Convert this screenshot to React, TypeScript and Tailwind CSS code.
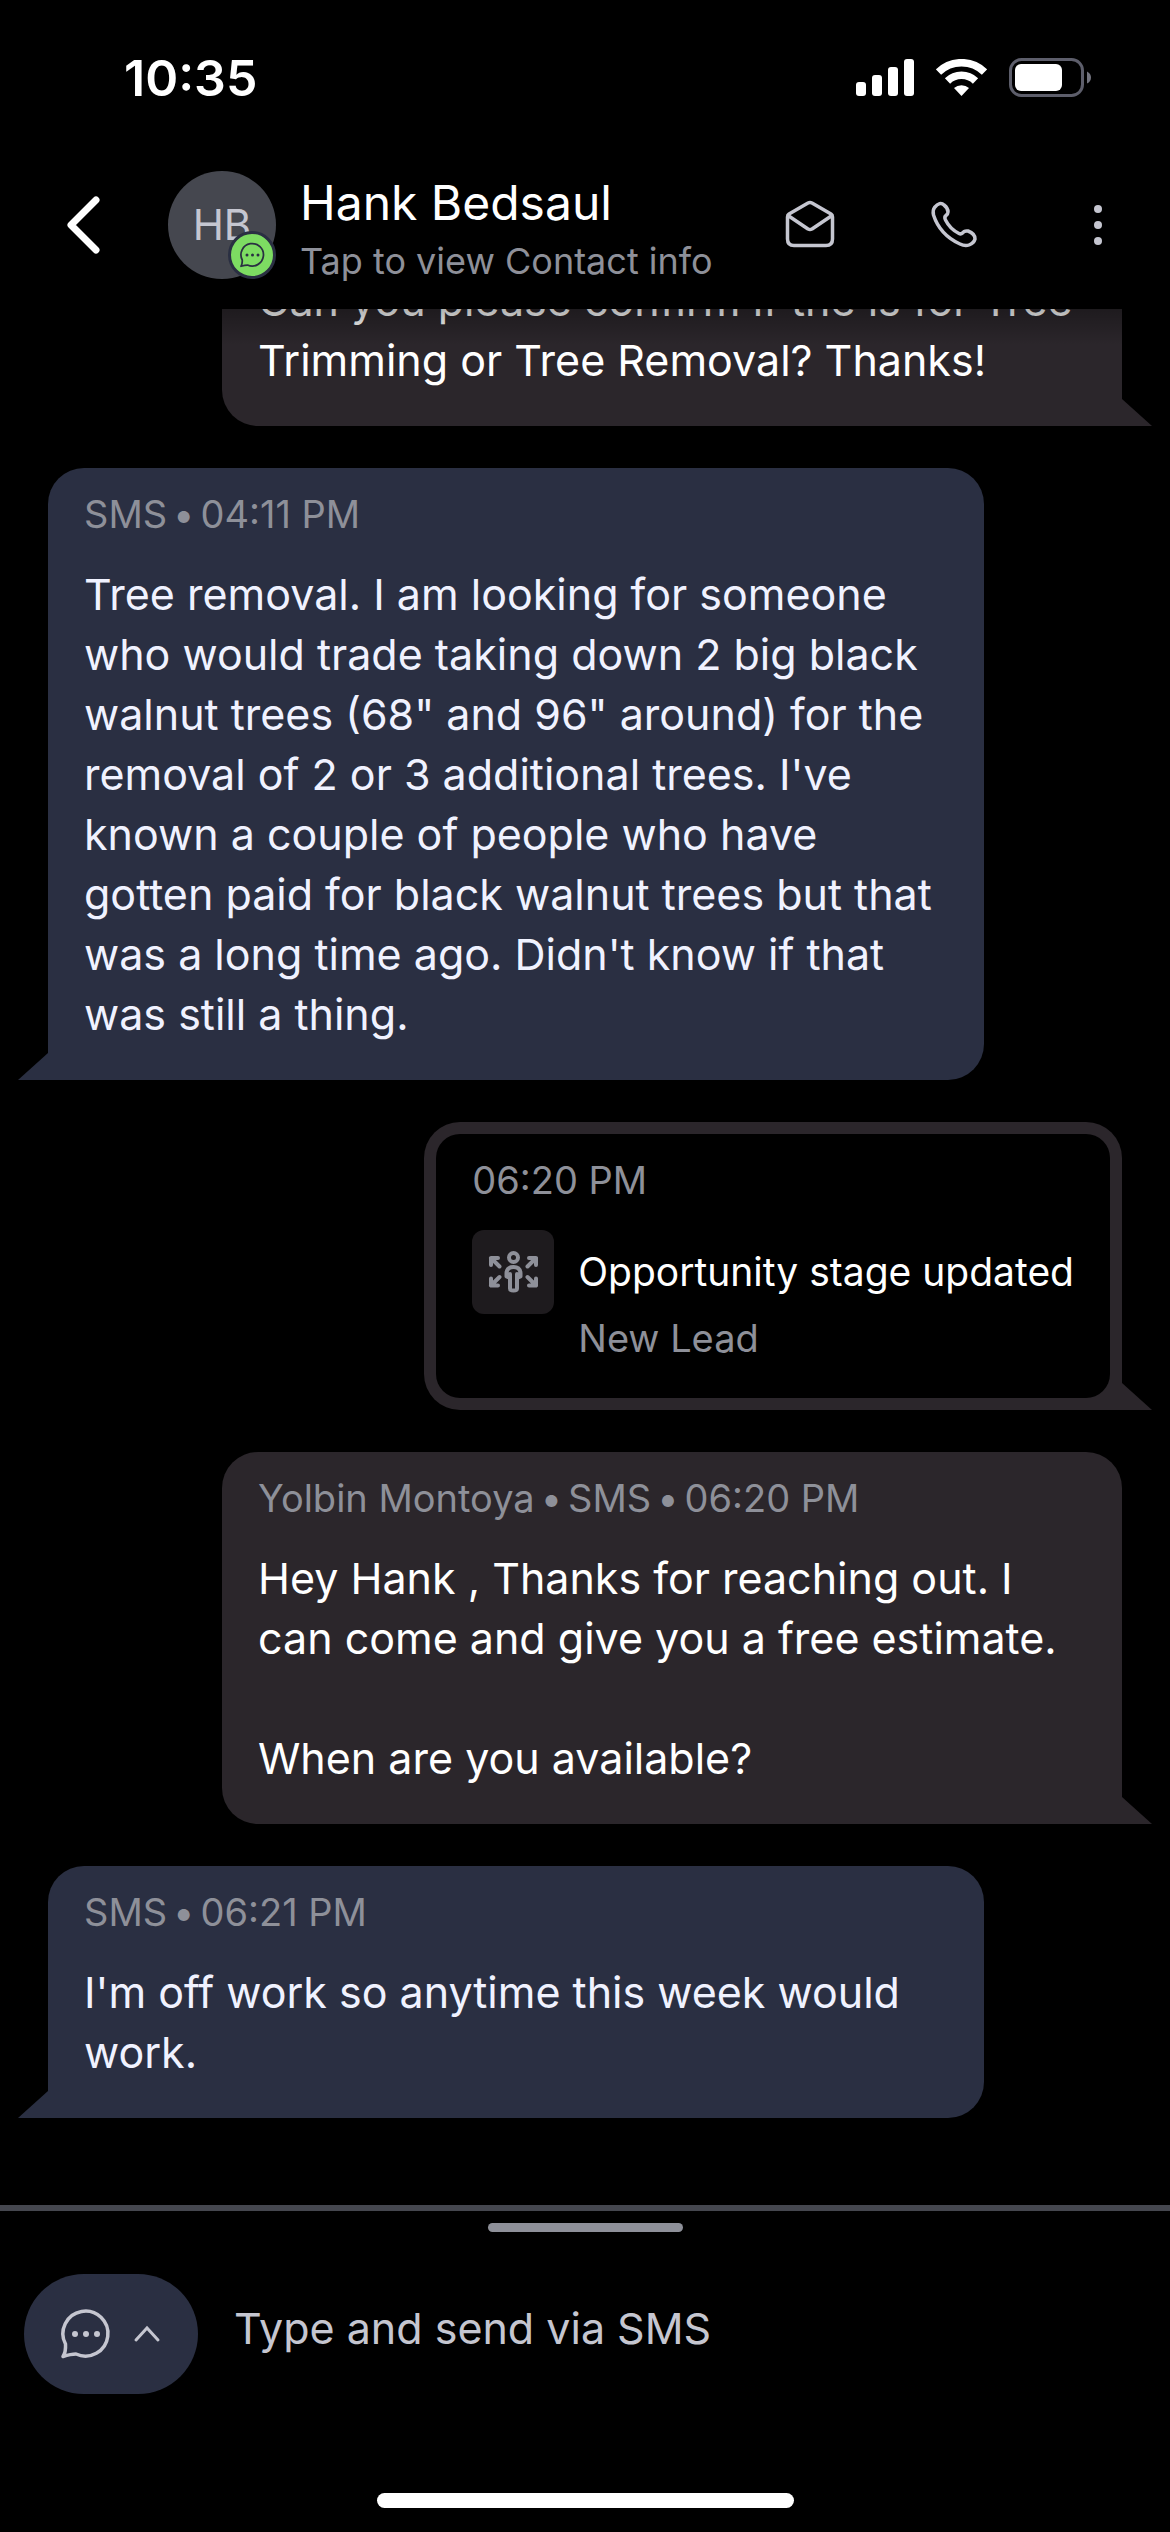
import { Fragment, useState, type ReactNode } from "react";

type BubbleProps = {
  side: "in" | "out";
  meta?: string[];
  children: ReactNode;
};

const SmsIcon = ({ className }: { className?: string }) => (
  <svg viewBox="0 0 56 56" fill="none" className={className} aria-hidden="true">
    <path
      d="M6 50.500 Q9 46 8.500 38 A22.500 22.500 0 1 1 19 48 Q14 48 6 50.500 Z"
      stroke="currentColor"
      strokeWidth="3.500"
      strokeLinejoin="round"
    />
    <circle cx="18" cy="28" r="3" fill="currentColor" />
    <circle cx="29" cy="28" r="3" fill="currentColor" />
    <circle cx="40" cy="28" r="3" fill="currentColor" />
  </svg>
);

const Meta = ({ parts }: { parts: string[] }) => (
  <p className="mb-7 flex gap-1.5 text-[38px] leading-[44px] text-[#8e9099]">
    {parts.map((part, i) => (
      <Fragment key={part}>
        {i > 0 && <span>•</span>}
        <span>{part}</span>
      </Fragment>
    ))}
  </p>
);

const Tail = ({ side }: { side: "in" | "out" }) =>
  side === "in" ? (
    <span className="absolute bottom-0 -left-[30px] h-[27px] w-[30px] bg-[#2a2f42] [clip-path:polygon(100%_0,100%_100%,0_100%)]" />
  ) : (
    <span className="absolute bottom-0 -right-[30px] h-[27px] w-[30px] bg-[#2b262b] [clip-path:polygon(0_0,100%_100%,0_100%)]" />
  );

const Bubble = ({ side, meta, children }: BubbleProps) => (
  <article
    className={
      side === "in"
        ? "relative mr-auto w-full max-w-[936px] shrink-0 rounded-[36px] rounded-bl-none bg-[#2a2f42] px-9 pt-6 pb-9 text-[#f0f2ff]"
        : "relative ml-auto w-full max-w-[900px] shrink-0 rounded-[36px] rounded-br-none bg-[#2b262b] px-9 pt-6 pb-9 text-white"
    }
  >
    {meta && <Meta parts={meta} />}
    <p className="text-[43px] leading-[60px] whitespace-pre-line">{children}</p>
    <Tail side={side} />
  </article>
);

const StatusBar = () => (
  <div className="flex h-[155px] shrink-0 items-center justify-between pr-[79px] pl-[124px] text-white">
    <span className="text-[50px] leading-[60px] font-semibold">10:35</span>
    <div className="flex items-center gap-[22px]">
      <svg viewBox="0 0 58 37" className="h-[37px] w-[58px]" fill="currentColor">
        <rect x="0" y="23" width="10" height="14" rx="3" />
        <rect x="16" y="16" width="10" height="21" rx="3" />
        <rect x="32" y="8" width="10" height="29" rx="3" />
        <rect x="48" y="0" width="10" height="37" rx="3" />
      </svg>
      <svg viewBox="0 0 51 37" className="h-[37px] w-[51px]" fill="none">
        <path d="M2.500 13 A33 33 0 0 1 48.500 13" stroke="currentColor" strokeWidth="7.500" />
        <path d="M11.500 22 A20 20 0 0 1 39.500 22" stroke="currentColor" strokeWidth="7.500" />
        <path d="M18 29 A12 12 0 0 1 33 29 L25.500 37 Z" fill="currentColor" />
      </svg>
      <svg viewBox="0 0 82 39" className="h-[39px] w-[82px]" fill="none">
        <rect x="1.500" y="1.500" width="72" height="36" rx="11" stroke="#5d5e6b" strokeWidth="3" />
        <rect x="6" y="6" width="47" height="27" rx="6" fill="currentColor" />
        <path d="M78 13.500 Q82 15.500 82 19.500 T78 25.500 Z" fill="#73747f" />
      </svg>
    </div>
  </div>
);

const ChatHeader = () => (
  <header className="flex shrink-0 items-center pt-2.5 pr-11 pb-6 pl-[60px]">
    <button type="button" aria-label="Back" className="mr-[62px] text-white">
      <svg viewBox="0 0 46 60" className="h-[60px] w-[46px]" fill="none">
        <path d="M36 5 L11 30 L36 55" stroke="currentColor" strokeWidth="7" strokeLinecap="round" strokeLinejoin="round" />
      </svg>
    </button>
    <button type="button" className="flex items-center gap-6 text-left">
      <span className="relative flex size-[108px] items-center justify-center rounded-full bg-[#45474f] text-[42px] leading-[60px] text-[#c5c6d0]">
        HB
        <span className="absolute right-0 bottom-0 flex size-12 items-center justify-center rounded-full border-[3px] border-[#2a2f42] bg-[#7ddc62] text-[#2a2f42]">
          <SmsIcon className="size-7" />
        </span>
      </span>
      <span className="flex flex-col pt-1">
        <span className="text-[48px] leading-[68px] text-white">
          Hank Bedsaul
        </span>
        <span className="text-[36px] leading-[48px] text-[#8e9099]">
          Tap to view Contact info
        </span>
      </span>
    </button>
    <nav className="ml-auto flex items-center gap-[88px] text-[#c5c6d0]">
      <button type="button" aria-label="Email">
        <svg viewBox="0 0 56 56" className="size-14" fill="none" stroke="currentColor" strokeWidth="3.500" strokeLinejoin="round">
          <path d="M5.500 20 V42 Q5.500 48.500 12 48.500 H44 Q50.500 48.500 50.500 42 V20 Q50.500 18 49 17 L30 6 Q28 5 26 6 L7 17 Q5.500 18 5.500 20 Z" />
          <path d="M6 18.500 L26 32 Q28 33 30 32 L50 18.500" />
        </svg>
      </button>
      <button type="button" aria-label="Call">
        <svg viewBox="0 0 56 56" className="size-14" fill="none" stroke="currentColor" strokeWidth="3.500" strokeLinejoin="round">
          <path d="M8.500 10.500 Q14 4 18 8 Q22 11 22 15 Q22 17 20 18.500 Q18 20 19.500 23 Q24 32 33 36.500 Q35 37.500 36.500 36 Q38 33.500 42 34 Q49 36.500 49 42 Q48 46 43 48 Q39 49.500 34 47 Q14 38 7.500 18 Q6.500 13 8.500 10.500 Z" />
        </svg>
      </button>
      <button type="button" aria-label="More options">
        <svg viewBox="0 0 56 56" className="size-14" fill="currentColor">
          <circle cx="28" cy="12" r="4" />
          <circle cx="28" cy="28" r="4" />
          <circle cx="28" cy="44" r="4" />
        </svg>
      </button>
    </nav>
  </header>
);

const StageIcon = () => (
  <svg viewBox="16 17 60 60" className="size-[60px]" fill="none" stroke="currentColor" strokeWidth="4" strokeLinecap="round" strokeLinejoin="round">
    <circle cx="46.500" cy="32.500" r="4.500" />
    <path d="M43 53 V63.500 Q43 65.500 46.500 65.500 Q50 65.500 50 63.500 V53 M43 49 V53 L39.500 51.500 V48 Q40 42 46.500 42 Q53 42 53.500 48 V51.500 L50 53 V49" />
    <path d="M24 40 V33 H31 M24 33 L32.500 41.500 M69 40 V33 H62 M69 33 L60.500 41.500" />
    <path d="M24 53.500 V60.500 H31 M24 60.500 L32.500 52 M69 53.500 V60.500 H62 M69 60.500 L60.500 52" />
  </svg>
);

const StageUpdate = () => (
  <article className="relative ml-auto shrink-0 rounded-[36px] rounded-br-none bg-[#2b262b] p-3">
    <div className="rounded-[24px] bg-black px-9 pt-6 pb-9">
      <Meta parts={["06:20 PM"]} />
      <div className="grid grid-cols-[auto_1fr] items-center gap-x-6">
        <span className="flex h-[84px] w-[82px] items-center justify-center rounded-xl bg-[#1e1b1e] text-[#8e9099]">
          <StageIcon />
        </span>
        <p className="text-[39px] leading-[48px] text-white">
          Opportunity stage updated
        </p>
        <p className="col-start-2 text-[38px] leading-[48px] text-[#8e9099]">
          New Lead
        </p>
      </div>
    </div>
    <Tail side="out" />
  </article>
);

const Composer = () => {
  const [text, setText] = useState("");

  return (
    <footer className="shrink-0 border-t-[6px] border-[#45474f] pb-6">
      <div className="mx-auto mt-3 h-[9px] w-[195px] rounded-full bg-[#8e9099]" />
      <form className="mt-[42px] flex items-center gap-9 px-6">
        <button
          type="button"
          aria-label="Choose channel"
          className="flex h-[120px] w-[174px] items-center justify-center gap-5 rounded-[60px] bg-[#2a2f42] pr-1 text-[#c5c6d0]"
        >
          <SmsIcon className="size-14" />
          <svg viewBox="0 0 28 28" className="size-7" fill="none">
            <path d="M3 20 L14 8 L25 20" stroke="currentColor" strokeWidth="3" strokeLinecap="round" />
          </svg>
        </button>
        <input
          aria-label="Message"
          value={text}
          onChange={(e) => setText(e.target.value)}
          placeholder="Type and send via SMS"
          className="h-[72px] min-w-0 flex-1 bg-transparent pb-3 text-[43px] text-white outline-none placeholder:text-[#c5c6d0]"
        />
      </form>
      <div className="mx-auto mt-[99px] h-[15px] w-[417px] rounded-full bg-white" />
    </footer>
  );
};

const App = () => {
  return (
    <main className="flex h-screen flex-col bg-black font-['Inter',sans-serif]">
      <StatusBar />
      <ChatHeader />
      <section className="relative flex min-h-0 flex-1 flex-col justify-end gap-[42px] overflow-hidden px-12 pb-[87px]">
        <Bubble side="out">
          {"Can you please confirm if the is for Tree\nTrimming or Tree Removal? Thanks!"}
        </Bubble>
        <Bubble side="in" meta={["SMS", "04:11 PM"]}>
          {`Tree removal. I am looking for someone
who would trade taking down 2 big black
walnut trees (68" and 96" around) for the
removal of 2 or 3 additional trees. I've
known a couple of people who have
gotten paid for black walnut trees but that
was a long time ago. Didn't know if that
was still a thing.`}
        </Bubble>
        <StageUpdate />
        <Bubble side="out" meta={["Yolbin Montoya", "SMS", "06:20 PM"]}>
          {"Hey Hank , Thanks for reaching out. I\ncan come and give you a free estimate.\n\nWhen are you available?"}
        </Bubble>
        <Bubble side="in" meta={["SMS", "06:21 PM"]}>
          {"I'm off work so anytime this week would\nwork."}
        </Bubble>
        <div className="absolute inset-x-0 top-0 h-9 bg-gradient-to-b from-black/30 to-transparent" />
      </section>
      <Composer />
    </main>
  );
};

export default App;
